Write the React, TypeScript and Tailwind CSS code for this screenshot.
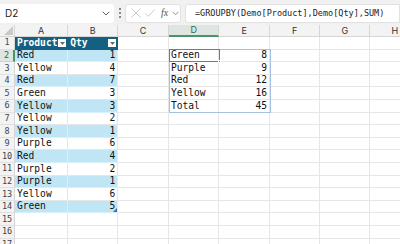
import React from "react";

const colW = [
  "w-[53.3px]",
  "w-[50px]",
  "w-[50.7px]",
  "w-[50.3px]",
  "w-[50.7px]",
  "w-[50.3px]",
  "w-[50px]",
  "w-[50px]",
];
const letters = ["A", "B", "C", "D", "E", "F", "G", "H"];

const data: [string, number][] = [
  ["Red", 1],
  ["Yellow", 4],
  ["Red", 7],
  ["Green", 3],
  ["Yellow", 3],
  ["Yellow", 2],
  ["Yellow", 1],
  ["Purple", 6],
  ["Red", 4],
  ["Purple", 2],
  ["Purple", 1],
  ["Yellow", 6],
  ["Green", 5],
];

const result: [string, number][] = [
  ["Green", 8],
  ["Purple", 9],
  ["Red", 12],
  ["Yellow", 16],
  ["Total", 45],
];

const mono = { fontFamily: '"DejaVu Sans Mono", monospace' };

function DropBtn() {
  return (
    <div className="absolute right-[1px] top-[2px] w-[8px] h-[8px] bg-white flex items-center justify-center">
      <svg width="5" height="3" viewBox="0 0 5 3">
        <path d="M0 0 L5 0 L2.5 3 Z" fill="#6b6b6b" />
      </svg>
    </div>
  );
}

function Row({ r }: { r: number }) {
  const cells: React.ReactNode[] = [];
  for (let c = 0; c < 8; c++) {
    let content: React.ReactNode = null;
    let cls = "border-r border-b border-[#e6e6e6] bg-white";
    if (r === 1 && c < 2) {
      cls = "border-r border-b border-[#156082] bg-[#156082] text-white font-bold relative";
      content = (
        <>
          <span className="pl-[2px] leading-[12px]">{c === 0 ? "Product" : "Qty"}</span>
          <DropBtn />
        </>
      );
    } else if (r >= 2 && r <= 14 && c < 2) {
      const d = data[r - 2];
      const band = r % 2 === 0;
      cls = band
        ? "border-r border-b border-[#d9f0fa] bg-[#c0e6f5] relative"
        : "border-r border-b border-[#e6e6e6] bg-white relative";
      content =
        c === 0 ? (
          <span className="pl-[2px] text-[#111]">{d[0]}</span>
        ) : (
          <span className="w-full text-right pr-[2px] text-[#111]">{d[1]}</span>
        );
      if (c === 1 && r === 14) {
        content = (
          <>
            {content}
            <div className="absolute right-0 bottom-0 w-0 h-0 border-l-[4px] border-l-transparent border-b-[4px] border-b-[#2f6fc0]" />
          </>
        );
      }
    } else if (r >= 2 && r <= 6 && (c === 3 || c === 4)) {
      const d = result[r - 2];
      content =
        c === 3 ? (
          <span className="pl-[2px] text-[#111]">{d[0]}</span>
        ) : (
          <span className="w-full text-right pr-[2px] text-[#111]">{d[1]}</span>
        );
    }
    cells.push(
      <div
        key={c}
        className={`${colW[c]} h-full shrink-0 flex items-center overflow-visible whitespace-nowrap ${cls}`}
      >
        {content}
      </div>
    );
  }
  const selected = r === 2;
  return (
    <div className="flex h-[12.6px] text-[9.6px]" style={mono}>
      <div
        className={`w-[15px] shrink-0 h-full flex items-center justify-center text-[8.5px] border-b ${
          selected
            ? "bg-[#dfe5e0] text-[#2e6b45] border-r-2 border-r-[#4a9467] border-b-[#d0d0d0]"
            : "bg-[#f3f3f3] text-[#444] border-r border-r-[#d6d6d6] border-b-[#e0e0e0]"
        }`}
      >
        {r}
      </div>
      {cells}
    </div>
  );
}

export default function App() {
  const rows = Array.from({ length: 17 }, (_, i) => i + 1);
  return (
    <div className="w-[400px] h-[244px] overflow-hidden bg-white flex flex-col" style={{ fontFamily: "Inter, sans-serif" }}>
      {/* formula bar */}
      <div className="h-[25px] shrink-0 bg-[#f1f1f1] flex items-center pt-[1px] gap-[4px]">
        <div className="w-[114px] h-[19px] bg-white flex items-center justify-between pl-[5px] pr-[4px] rounded-r-[3px]">
          <span className="text-[10px] text-[#222]">D2</span>
          <svg width="8" height="5" viewBox="0 0 8 5">
            <path d="M0.8 0.8 L4 4 L7.2 0.8" fill="none" stroke="#666" strokeWidth="1" />
          </svg>
        </div>
        <div className="flex flex-col gap-[2px] w-[3px] items-center">
          <div className="w-[2px] h-[2px] bg-[#666] rounded-full" />
          <div className="w-[2px] h-[2px] bg-[#666] rounded-full" />
          <div className="w-[2px] h-[2px] bg-[#666] rounded-full" />
        </div>
        <div className="w-[56px] h-[19px] bg-white border border-[#e2e2e2] rounded-[3px] flex items-center pl-[5px] gap-[4px]">
          <svg width="10" height="10" viewBox="0 0 10 10">
            <path d="M0.5 0.5 L9.5 9.5 M9.5 0.5 L0.5 9.5" stroke="#c4c4c4" strokeWidth="0.9" />
          </svg>
          <svg width="10" height="8" viewBox="0 0 10 8">
            <path d="M0.5 4.2 L3.5 7.3 L9.5 0.6" fill="none" stroke="#c4c4c4" strokeWidth="0.9" />
          </svg>
          <span
            className="text-[10px] italic text-[#555] ml-[2px] leading-none"
            style={{ fontFamily: '"Liberation Serif", serif' }}
          >
            fx
          </span>
          <svg width="7" height="5" viewBox="0 0 7 5">
            <path d="M0.6 0.8 L3.5 3.8 L6.4 0.8" fill="none" stroke="#888" strokeWidth="0.9" />
          </svg>
        </div>
        <div className="flex-1 h-[19px] bg-white border border-[#e2e2e2] rounded-l-[3px] flex items-center pl-[9px]">
          <span className="text-[8.5px] text-[#222] whitespace-nowrap" style={mono}>
            =GROUPBY(Demo[Product],Demo[Qty],SUM)
          </span>
        </div>
      </div>
      {/* grid */}
      <div className="relative flex-1 overflow-hidden">
        <div className="flex h-[12px] bg-[#f3f3f3] text-[9px] text-[#333]">
          <div className="w-[15px] shrink-0 h-full relative border-r border-b border-[#d6d6d6]">
            <div className="absolute right-[1px] bottom-[1px] w-0 h-0 border-l-[9px] border-l-transparent border-b-[9px] border-b-[#c9c9c9]" />
          </div>
          {letters.map((l, i) => (
            <div
              key={l}
              className={`${colW[i]} shrink-0 h-full flex items-center justify-center ${
                i === 3
                  ? "bg-[#dfe5e0] text-[#2e6b45] border-b-2 border-b-[#4a9467] border-r border-r-[#d6d6d6]"
                  : "border-r border-b border-[#d6d6d6]"
              }`}
            >
              {l}
            </div>
          ))}
        </div>
        {rows.map((r) => (
          <Row key={r} r={r} />
        ))}
        {/* spill range border */}
        <div className="absolute left-[168.5px] top-[24px] w-[102px] h-[64.2px] border border-[#a6bfe3] pointer-events-none" />
        {/* active cell */}
        <div className="absolute left-[168.5px] top-[23.8px] w-[51px] h-[13.6px] border-[1.5px] border-[#4a9467] pointer-events-none">
          <div className="absolute -right-[2px] -bottom-[2px] w-[3px] h-[3px] bg-[#4a9467] border border-white" />
        </div>
      </div>
    </div>
  );
}
